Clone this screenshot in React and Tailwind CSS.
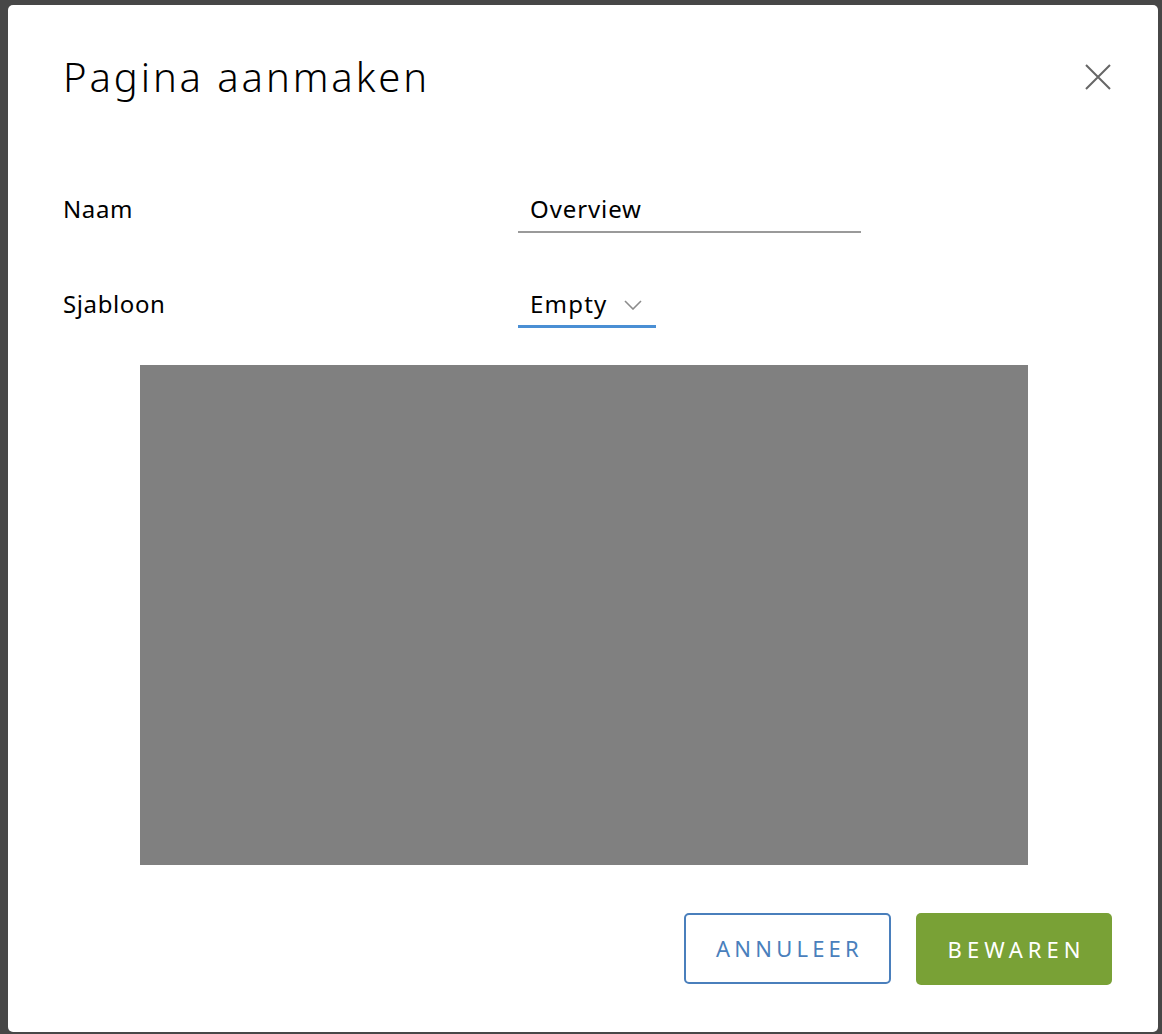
const App = () => {
  return (
    <div className="min-h-[1034px] w-[1162px] bg-[#474747] pl-[8px] pt-[5px]" style={{ fontFamily: '"Noto Sans", "Open Sans", sans-serif' }}>
      <div className="w-[1150px] h-[1027px] bg-white rounded-[5px] pl-[55px] pr-[46px] flex flex-col">
        {/* Header */}
        <div className="flex items-center justify-between pt-[48px]">
          <h1 className="text-[40px] leading-[48px] font-light text-black tracking-[2.9px]">Pagina aanmaken</h1>
          <button className="text-[#666666] mr-[1px]">
            <svg width="26" height="26" viewBox="0 0 26 26" fill="none" stroke="currentColor" strokeWidth="2">
              <path d="M1 1 25 25M25 1 1 25" />
            </svg>
          </button>
        </div>

        {/* Form */}
        <div className="mt-[93px] flex items-start">
          <label className="w-[455px] text-[24px] text-black leading-[30px] tracking-[0.6px]">Naam</label>
          <div className="w-[343px] border-b-2 border-[#9a9a9a] pl-[12px] pb-[7px]">
            <span className="text-[24px] leading-[30px] text-black tracking-[0.9px]">Overview</span>
          </div>
        </div>

        <div className="mt-[56px] flex items-start">
          <label className="w-[455px] text-[24px] text-black leading-[30px] tracking-[0.6px]">Sjabloon</label>
          <div className="w-[138px] h-[39px] border-b-[3px] border-[#4a8fd4] pl-[12px] flex items-start">
            <span className="text-[24px] leading-[30px] text-black tracking-[1.2px]">Empty</span>
            <svg className="ml-[17px] mt-[11px]" width="18" height="10" viewBox="0 0 18 10" fill="none" stroke="#8c8c8c" strokeWidth="1.6">
              <path d="M1 1 9 9 17 1" />
            </svg>
          </div>
        </div>

        {/* Preview */}
        <div className="mt-[37px] ml-[77px] w-[888px] h-[500px] bg-[#808080]" />

        {/* Footer */}
        <div className="mt-[48px] flex justify-end gap-[25px]">
          <button className="w-[207px] h-[71px] border-2 border-[#4a7fbc] rounded-[5px] text-[#4a7fbc] text-[22px] tracking-[4.2px] pl-[4px]">
            ANNULEER
          </button>
          <button className="w-[196px] h-[72px] bg-[#79a136] rounded-[5px] text-white text-[22px] tracking-[5px] pl-[5px]">
            BEWAREN
          </button>
        </div>
      </div>
    </div>
  );
};

export default App;
